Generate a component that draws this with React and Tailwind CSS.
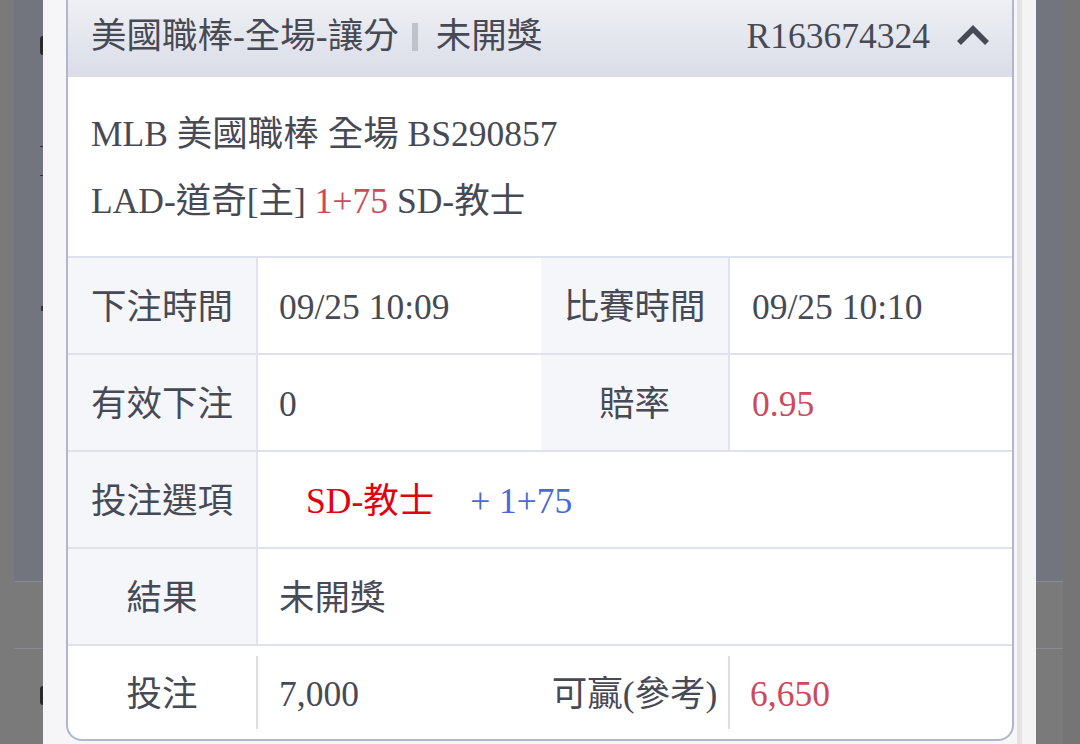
import React from "react";

function ChevronUp() {
  return (
    <svg width="34" height="22" viewBox="0 0 34 22" fill="none">
      <polyline
        points="3,19 17,5 31,19"
        stroke="#474a55"
        strokeWidth="5.5"
        strokeLinejoin="miter"
      />
    </svg>
  );
}

function Label({ children, w, bg = true }) {
  return (
    <div
      className={`${w} flex items-center justify-center pt-[5px] ${bg ? "bg-[#f5f6fa]" : ""}`}
    >
      {children}
    </div>
  );
}

function Divider() {
  return <div className="w-[2px] self-stretch bg-[#e0e2f0]" />;
}

function Row({ children, last }) {
  return (
    <div
      className={`flex border-t-2 border-[#dfe1ef] ${last ? "h-[95px]" : "h-[97px]"}`}
    >
      {children}
    </div>
  );
}

function Cell({ children, className = "" }) {
  return <div className={`flex items-center pt-[5px] ${className}`}>{children}</div>;
}

function SideColumn({ width, marks }) {
  return (
    <div className={`${width} flex flex-col`}>
      <div className="h-[581px] bg-[#72757e] flex flex-col items-end">
        {marks && (
          <>
            <div className="mt-[36px] w-[3px] h-[19px] rounded-l-full bg-[#2a2a2a]" />
            <div className="mt-[91px] w-[3px] h-px bg-[#333333]" />
            <div className="mt-[28px] w-[3px] h-px bg-[#333333]" />
            <div className="mt-[130px] w-[2px] h-[5px] bg-[#333333]" />
          </>
        )}
      </div>
      <div className="h-px bg-[#8a8b90]" />
      <div className="h-[66px] bg-[#7a7a7a]" />
      <div className="h-px bg-[#8a8b90]" />
      <div className="flex-1 bg-[#7a7a7a] flex flex-col items-end">
        {marks && (
          <div className="mt-[37px] w-[3px] h-[19px] rounded-l-full bg-[#2a2a2a]" />
        )}
      </div>
    </div>
  );
}

export default function App() {
  return (
    <div className="h-[744px] w-[1080px] overflow-hidden flex bg-[#7a7a7a] font-['Liberation_Serif','Noto_Sans_CJK_TC',serif] text-[35.5px] text-[#474a55]">
      {/* backdrop left */}
      <div className="w-[14px] bg-[#7a7a7a]" />
      <SideColumn width="w-[29px]" marks />

      {/* sheet */}
      <div className="w-[993px] bg-[#f6f6f8] flex pl-[23px]">
        <div className="w-[948px] self-start bg-white border-x-2 border-b-2 border-[#b1b5cd] rounded-b-[16px] overflow-hidden">
          {/* header */}
          <div className="h-[77px] flex items-center justify-between pl-[23px] pr-[22px] pb-[4px] bg-gradient-to-b from-[#eef0f4] to-[#dadde8]">
            <div className="flex items-center">
              <span>美國職棒-全場-讓分</span>
              <span className="ml-[13px] w-[6px] h-[28px] bg-[#bfc2cb]" />
              <span className="ml-[18px]">未開獎</span>
            </div>
            <div className="flex items-center">
              <span>R163674324</span>
              <span className="ml-[26px] mb-[4px] flex">
                <ChevronUp />
              </span>
            </div>
          </div>

          {/* match info */}
          <div className="px-[23px] pt-[24px] pb-[21px] leading-[67px]">
            <div>MLB 美國職棒 全場 BS290857</div>
            <div>
              LAD-道奇[主] <span className="text-[#cc4a5c]">1+75</span> SD-教士
            </div>
          </div>

          {/* detail table */}
          <Row>
            <Label w="w-[188px]">下注時間</Label>
            <Divider />
            <Cell className="w-[283px] pl-[21px]">09/25 10:09</Cell>
            <Label w="w-[187px]">比賽時間</Label>
            <Divider />
            <Cell className="flex-1 pl-[22px]">09/25 10:10</Cell>
          </Row>
          <Row>
            <Label w="w-[188px]">有效下注</Label>
            <Divider />
            <Cell className="w-[283px] pl-[21px]">0</Cell>
            <Label w="w-[187px]">賠率</Label>
            <Divider />
            <Cell className="flex-1 pl-[22px] text-[#cc4a5c]">0.95</Cell>
          </Row>
          <Row>
            <Label w="w-[188px]">投注選項</Label>
            <Divider />
            <Cell className="flex-1 pl-[48px]">
              <span className="text-[#e3000f]">SD-教士</span>
              <span className="ml-[36px] text-[#4a68d8]">+ 1+75</span>
            </Cell>
          </Row>
          <Row>
            <Label w="w-[188px]">結果</Label>
            <Divider />
            <Cell className="flex-1 pl-[21px]">未開獎</Cell>
          </Row>
          <Row last>
            <Label w="w-[188px]" bg={false}>投注</Label>
            <div className="w-[2px] h-[73px] self-center bg-[#dcdde6]" />
            <Cell className="w-[283px] pl-[21px]">7,000</Cell>
            <Label w="w-[187px]" bg={false}>可贏(參考)</Label>
            <div className="w-[2px] h-[73px] self-center bg-[#dcdde6]" />
            <Cell className="flex-1 pl-[20px] text-[#cc4a5c]">6,650</Cell>
          </Row>
        </div>

        {/* scroll track */}
        <div className="ml-[3px] w-[5px] bg-[#e4e2e3]" />
        <div className="w-[14px] bg-[#f4f4f4]" />
      </div>

      {/* backdrop right */}
      <SideColumn width="w-[27px]" />
      <div className="flex-1 bg-[#757575]" />
    </div>
  );
}
